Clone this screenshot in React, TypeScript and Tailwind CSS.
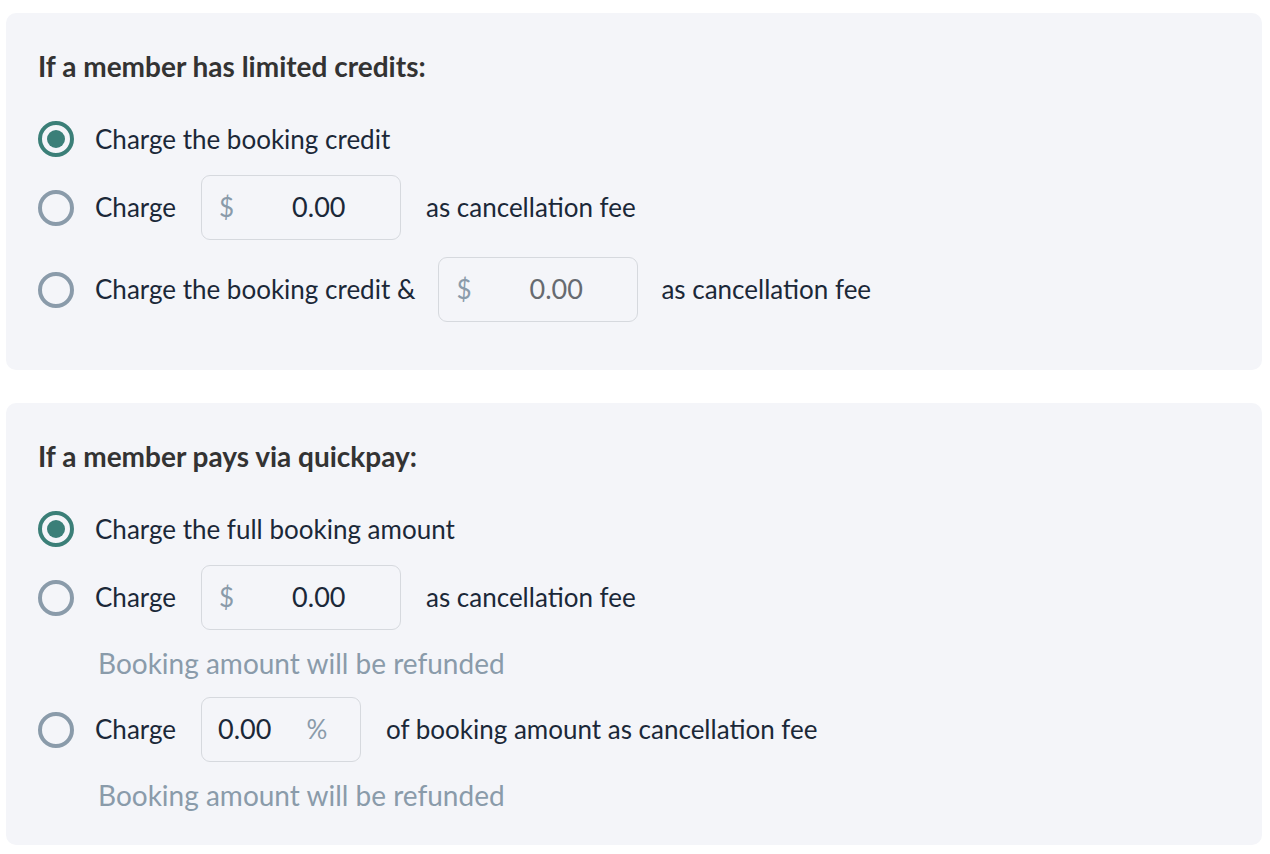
import React, { useState } from 'react';

const Radio: React.FC<{ checked: boolean; onClick: () => void }> = ({ checked, onClick }) => (
  <button
    type="button"
    onClick={onClick}
    className={`flex h-[36px] w-[36px] shrink-0 items-center justify-center rounded-full border-[4px] ${
      checked ? 'border-[#3b7f78]' : 'border-[#8a9baa]'
    }`}
  >
    {checked && <span className="h-[18px] w-[18px] rounded-full bg-[#3b7f78]" />}
  </button>
);

const MoneyInput: React.FC<{ value: string; muted?: boolean }> = ({ value, muted }) => (
  <div className="flex h-[65px] w-[200px] shrink-0 items-center rounded-[9px] border border-[#d6d9de] pl-[17px]">
    <span className="text-[#8a9baa]">$</span>
    <span className={`ml-[58px] text-[27px] ${muted ? 'text-[#666a70]' : 'text-[#1b2838]'}`}>{value}</span>
  </div>
);

const PercentInput: React.FC<{ value: string }> = ({ value }) => (
  <div className="flex h-[65px] w-[160px] shrink-0 items-center rounded-[9px] border border-[#d6d9de] pl-[16px]">
    <span className="text-[27px] text-[#1b2838]">{value}</span>
    <span className="ml-[35px] text-[#8a9baa]">%</span>
  </div>
);

export default function App() {
  const [credits, setCredits] = useState(0);
  const [quickpay, setQuickpay] = useState(0);

  return (
    <div
      className="min-h-screen bg-white pt-[13px] pr-[8px] pl-[6px] text-[26px] text-[#1b2838]"
      style={{ fontFamily: 'Lato, "Open Sans", sans-serif' }}
    >
      <div className="rounded-[10px] bg-[#f4f5f9] px-[32px] pt-[36px] pb-[48px]">
        <h2 className="text-[28px] leading-[34px] font-bold text-[#333]">If a member has limited credits:</h2>
        <div className="mt-[37px] flex flex-col gap-[17px]">
          <div className="flex h-[38px] items-center gap-[21px]">
            <Radio checked={credits === 0} onClick={() => setCredits(0)} />
            <span>Charge the booking credit</span>
          </div>
          <div className="flex items-center gap-[25px]">
            <Radio checked={credits === 1} onClick={() => setCredits(1)} />
            <span className="-ml-[4px]">Charge</span>
            <MoneyInput value="0.00" />
            <span>as cancellation fee</span>
          </div>
          <div className="flex items-center gap-[23px]">
            <Radio checked={credits === 2} onClick={() => setCredits(2)} />
            <span className="-ml-[2px]">Charge the booking credit &amp;</span>
            <MoneyInput value="0.00" muted />
            <span>as cancellation fee</span>
          </div>
        </div>
      </div>

      <div className="mt-[33px] rounded-[10px] bg-[#f4f5f9] px-[32px] pt-[36px] pb-[33px]">
        <h2 className="text-[28px] leading-[34px] font-bold text-[#333]">If a member pays via quickpay:</h2>
        <div className="mt-[37px] flex flex-col gap-[17px]">
          <div className="flex h-[38px] items-center gap-[21px]">
            <Radio checked={quickpay === 0} onClick={() => setQuickpay(0)} />
            <span>Charge the full booking amount</span>
          </div>
          <div className="flex items-center gap-[25px]">
            <Radio checked={quickpay === 1} onClick={() => setQuickpay(1)} />
            <span className="-ml-[4px]">Charge</span>
            <MoneyInput value="0.00" />
            <span>as cancellation fee</span>
          </div>
          <div className="pl-[60px] text-[28px] leading-[33px] text-[#8a9baa]">Booking amount will be refunded</div>
          <div className="flex items-center gap-[25px]">
            <Radio checked={quickpay === 2} onClick={() => setQuickpay(2)} />
            <span className="-ml-[4px]">Charge</span>
            <PercentInput value="0.00" />
            <span>of booking amount as cancellation fee</span>
          </div>
          <div className="pl-[60px] text-[28px] leading-[33px] text-[#8a9baa]">Booking amount will be refunded</div>
        </div>
      </div>
    </div>
  );
}
